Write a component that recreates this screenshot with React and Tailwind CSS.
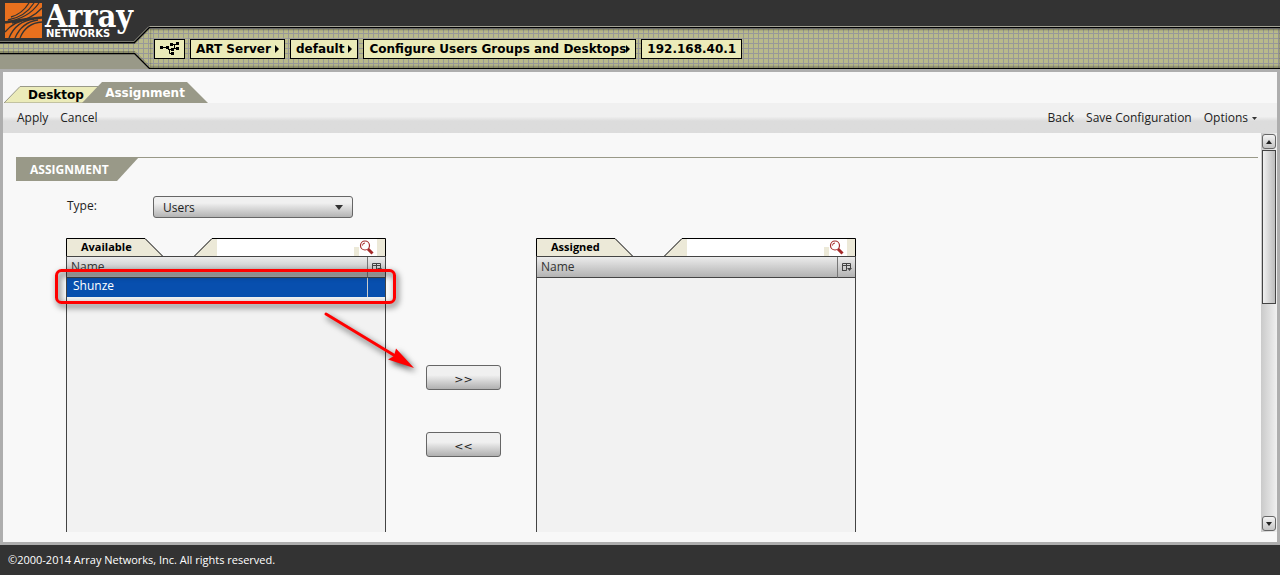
import React, { useState } from 'react';

const crumbs = ['ART Server', 'default', 'Configure Users Groups and Desktops', '192.168.40.1'];

const Logo = () => (
    <svg width="150" height="69" className="block shrink-0" role="img" aria-label="Array Networks">
        <defs>
            <pattern id="mesh" width="5" height="5" patternUnits="userSpaceOnUse">
                <rect width="5" height="5" fill="#b9ba8b" />
                <path d="M3.5 0V5M0 3.5H5" stroke="#989898" />
            </pattern>
        </defs>
        <rect width="150" height="69" fill="#333333" />
        <path d="M0 53H135L150 68V69H0Z" fill="#999988" />
        <path d="M0 42H134L150 26V69L134 53H0Z" fill="url(#mesh)" />
        <path d="M0 43.5H135L150 28.5M0 51.5H135L150 66.5" fill="none" stroke="#000" strokeOpacity=".25" />
        <path d="M0 41.5H134L149 26.5H150" fill="none" stroke="#a3a396" />
        <path d="M0 42.5H134.5L149.5 27.5H150M0 53.5H134.5L149.5 68.5H150" fill="none" stroke="#000" strokeWidth="1.3" />
        <rect x="5" y="3" width="37" height="35" fill="#e8701e" />
        <g fill="none" stroke="#333333" strokeWidth="1.3">
            <path d="M11 17Q22 14 29 3" />
            <path d="M8 20Q25 17 34 3" />
            <path d="M5 22Q28 19 39 3" />
            <path d="M12 23Q31 20 42 8" />
            <path d="M42 22Q26 23 20 38" />
            <path d="M38 20Q22 22 15 38" />
            <path d="M34 19Q16 21 9 38" />
            <path d="M30 19Q14 21 5 32" />
            <path d="M5 22.5Q24 19 42 17.5" strokeWidth="2.4" />
        </g>
        <text x="45" y="27" fill="#fff" fontSize="32" fontWeight="700" fontFamily="'DejaVu Serif Condensed', 'DejaVu Serif', serif">Array</text>
        <text x="46" y="37" fill="#fff" fontSize="10" fontWeight="700" fontFamily="'DejaVu Sans', sans-serif">NETWORKS</text>
    </svg>
);

const Crumb = ({ children, arrow }) => (
    <a
        href="#"
        className={`flex h-5 items-center border border-black bg-[#ebebb9] px-[5px] font-['DejaVu_Sans'] text-[12px] font-bold text-black ${children.length > 20 ? 'gap-0' : 'gap-1'}`}
    >
        {children}
        {arrow && (
            <svg width="4" height="8" className="shrink-0" aria-hidden="true"><path d="M0 0L4 4L0 8Z" /></svg>
        )}
    </a>
);

const Header = () => (
    <header className="flex bg-[#333333]">
        <Logo />
        <div className="flex flex-1 flex-col pt-[26px]">
            <div className="border-t border-[#a3a396]" />
            <nav
                aria-label="Breadcrumb"
                className="flex flex-1 items-center gap-[5px] border-y border-black bg-[#b9ba8b] bg-[linear-gradient(90deg,transparent_3px,#989898_3px,#989898_4px,transparent_4px),linear-gradient(#989898_1px,transparent_1px)] bg-[length:5px_5px] pt-px pl-1 shadow-[inset_0_2px_2px_#0005,inset_0_-2px_2px_#0004]"
            >
                <a href="#" aria-label="Home" className="flex h-5 items-center border border-black bg-[#ebebb9] px-[5px]">
                    <svg width="19" height="14" aria-hidden="true">
                        <path d="M3 5.5H8M8.5 5V8M8 7.5H12M10 3.5H12V2.5H17M14.5 2V7M14 6.5H17M9.5 8V11.5H12" fill="none" stroke="#000" />
                        <path d="M0 4h3v3h-3zM6 4h3v3h-3zM10 1h3v3h-3zM16 0h3v3h-3zM11 6h3v3h-3zM16 5h3v3h-3zM11 10h3v3h-3z" />
                    </svg>
                </a>
                {crumbs.map((text, i) => (
                    <Crumb key={text} arrow={i < crumbs.length - 1}>{text}</Crumb>
                ))}
            </nav>
        </div>
    </header>
);

const Tabs = () => (
    <div className="flex h-[31px] items-end" role="tablist">
        <button type="button" role="tab" aria-selected="false" className="relative h-[17px] w-[98px] pl-2 font-['DejaVu_Sans'] text-[12px] leading-4 font-bold text-black">
            <svg width="98" height="17" className="absolute top-0 left-0" aria-hidden="true">
                <path d="M1 17L17 .5H98V17Z" fill="#ebebb9" stroke="#999988" />
            </svg>
            <span className="relative">Desktop</span>
        </button>
        <button type="button" role="tab" aria-selected="true" className="relative -ml-[19px] h-[21px] w-[126px] pt-px font-['DejaVu_Sans'] text-[12px] leading-5 font-bold text-white">
            <svg width="126" height="21" className="absolute top-0 left-0" aria-hidden="true">
                <path d="M0 21L20 0H105L126 21Z" fill="#999988" />
            </svg>
            <span className="relative">Assignment</span>
        </button>
    </div>
);

const Toolbar = () => (
    <div className="flex h-[30px] items-center justify-between bg-linear-to-b from-[#f0f0f0] from-45% to-[#dcdcdc] to-60% pr-5 pl-[14px]">
        <div className="flex gap-3">
            <button type="button">Apply</button>
            <button type="button">Cancel</button>
        </div>
        <div className="flex gap-3">
            <button type="button">Back</button>
            <button type="button">Save Configuration</button>
            <button type="button" className="flex items-center gap-1">
                Options
                <svg width="5" height="3" aria-hidden="true"><path d="M0 0H5L2.5 3Z" fill="#333" /></svg>
            </button>
        </div>
    </div>
);

const ScrollButton = ({ label, d }) => (
    <button type="button" aria-label={label} className="flex h-[15px] w-[14px] items-center justify-center rounded-[3px] border border-[#666] bg-linear-to-b from-[#f4f4f4] to-[#c4c4c4]">
        <svg width="6" height="4" aria-hidden="true"><path d={d} fill="#222" /></svg>
    </button>
);

const ScrollBar = () => (
    <div className="flex w-4 shrink-0 flex-col items-center bg-linear-to-r from-[#cacaca] to-[#f0f0f0] py-px">
        <ScrollButton label="Scroll up" d="M0 4L3 0L6 4Z" />
        <div className="mt-px flex w-[14px] flex-1 flex-col">
            <div className="h-[42%] border border-[#444] bg-linear-to-r from-[#f0f0f0] to-[#bdbdbd]" />
        </div>
        <ScrollButton label="Scroll down" d="M0 0H6L3 4Z" />
    </div>
);

const ListPanel = ({ title, rows, selected, onSelect, children }) => (
    <section className="relative flex w-80 flex-col">
        <div className="relative flex h-[18px] items-stretch">
            <svg width="320" height="18" className="absolute top-0 left-0" aria-hidden="true">
                <path d="M.5 18V.5H79L96.5 18" fill="#ece9d8" stroke="#000" />
                <path d="M128.5 18L146 .5H319.5V18" fill="#ece9d8" stroke="#000" />
            </svg>
            <h3 className="relative w-[151px] pl-[15px] text-[11px] leading-[18px] font-bold text-black">{title}</h3>
            <input
                type="text"
                aria-label={`Search ${title}`}
                className="relative mt-px w-[137px] bg-white px-1 outline-none"
            />
            <button type="button" aria-label="Search" className="relative mt-px w-[23px] bg-white">
                <svg width="23" height="17" aria-hidden="true">
                    <path d="M0 8H5V17H0Z" fill="#ece9d8" />
                    <circle cx="11" cy="6.5" r="4.5" fill="#fff" stroke="#a52a2a" strokeWidth="1.2" />
                    <path d="M8.5 6.5Q8.5 4 11 4" fill="none" stroke="#a52a2a" />
                    <path d="M14 10L18.5 14.5" stroke="#a52a2a" strokeWidth="3" />
                </svg>
            </button>
        </div>
        <div className="flex flex-1 flex-col border-x border-t border-[#444] bg-[#f2f2f2]">
            <table className="w-full table-fixed border-separate border-spacing-0">
                <thead>
                    <tr className="bg-linear-to-b from-[#ececec] to-[#b0b0b0]">
                        <th scope="col" className="h-[21px] border-b border-[#444] p-0 pl-1 text-left leading-5 font-normal text-[#333]">Name</th>
                        <th scope="col" className="h-[21px] w-[18px] border-b border-l border-b-[#444] border-l-[#777] p-0">
                            <button type="button" aria-label="Choose columns" className="flex w-full justify-center">
                                <svg width="10" height="9" aria-hidden="true">
                                    <path d="M.5 7.5V.5H8.5V5M0 2.5H9M4.5 0V7.5H0" fill="none" stroke="#444" />
                                    <path d="M5 5H10L7.5 8Z" fill="#444" />
                                </svg>
                            </button>
                        </th>
                    </tr>
                </thead>
                <tbody>
                    {rows.map((name) => (
                        <tr
                            key={name}
                            onClick={() => onSelect(name)}
                            className={selected === name ? 'bg-[#084fae] text-white' : ''}
                        >
                            <td className="h-[19px] p-0 pb-[3px] pl-[6px] leading-4">{name}</td>
                            <td className="border-l border-[#ccc] p-0" />
                        </tr>
                    ))}
                </tbody>
            </table>
        </div>
        {children}
    </section>
);

// Highlight frame and arrow drawn over the Available list
const Callout = () => (
    <svg width="380" height="130" className="pointer-events-none absolute top-6 -left-4 z-10 drop-shadow-[2px_3px_3px_rgba(0,0,0,0.7)]" aria-hidden="true">
        <rect x="6.5" y="8.5" width="338" height="32" rx="5" fill="none" stroke="#f00" strokeWidth="3" />
        <path d="M276 52L347 95" stroke="#f00" strokeWidth="3" strokeLinecap="round" />
        <path d="M364 106L338 97.5L344 94L346 86.5Z" fill="#f00" />
    </svg>
);

const MoveButton = ({ label, children, onClick }) => (
    <button
        type="button"
        aria-label={label}
        onClick={onClick}
        className="h-[25px] w-[75px] rounded-[3px] border border-[#666] bg-linear-to-b from-[#f0f0f0] from-40% to-[#b0b0b0] pt-1 font-['DejaVu_Sans'] text-[11px] leading-5"
    >
        {children}
    </button>
);

const App = () => {
    const [available, setAvailable] = useState(['Shunze']);
    const [assigned, setAssigned] = useState([]);
    const [selected, setSelected] = useState('Shunze');

    const assign = () => {
        if (!available.includes(selected)) return;
        setAvailable(available.filter((n) => n !== selected));
        setAssigned([...assigned, selected]);
    };

    const unassign = () => {
        if (!assigned.includes(selected)) return;
        setAssigned(assigned.filter((n) => n !== selected));
        setAvailable([...available, selected]);
    };

    return (
        <div className="flex min-h-screen flex-col bg-[#333333] font-['Open_Sans','Noto_Sans',sans-serif] text-[12px] leading-4 text-[#222]">
            <Header />
            <main className="flex flex-1 flex-col border-[3px] border-[#aeaeae] bg-[#f8f8f8] pb-[10px]">
                <Tabs />
                <Toolbar />
                <div className="flex flex-1">
                    <div className="flex flex-1 flex-col pt-6 pr-[3px] pl-[13px]">
                        <div className="flex h-6 border-t border-[#999988]">
                            <h2 className="relative -mt-px h-6 w-[123px] pt-px pl-[14px] text-[12px] leading-6 font-bold text-white">
                                <svg width="123" height="24" className="absolute top-0 left-0" aria-hidden="true">
                                    <path d="M0 0H123L101 24H0Z" fill="#999988" />
                                </svg>
                                <span className="relative">ASSIGNMENT</span>
                            </h2>
                        </div>
                        <div className="flex flex-1 flex-col pt-[15px] pl-[50px]">
                            <div className="flex">
                                <label htmlFor="type" className="w-[87px] pt-[2px] pl-px">Type:</label>
                                <div className="relative">
                                    <select id="type" className="h-[22px] w-[200px] appearance-none rounded-[3px] border border-[#666] bg-linear-to-b from-[#f0f0f0] from-30% to-[#b4b4b4] pt-px pl-[9px]">
                                        <option>Users</option>
                                        <option>Groups</option>
                                    </select>
                                    <svg width="8" height="5" className="pointer-events-none absolute top-[9px] right-[10px]" aria-hidden="true">
                                        <path d="M0 0H8L4 5Z" fill="#333" />
                                    </svg>
                                </div>
                            </div>
                            <div className="flex flex-1 pt-5">
                                <ListPanel title="Available" rows={available} selected={selected} onSelect={setSelected}>
                                    <Callout />
                                </ListPanel>
                                <div className="flex w-[150px] flex-col items-center gap-[42px] pt-[127px] pl-[5px]">
                                    <MoveButton label="Assign" onClick={assign}>&gt;&gt;</MoveButton>
                                    <MoveButton label="Unassign" onClick={unassign}>&lt;&lt;</MoveButton>
                                </div>
                                <ListPanel title="Assigned" rows={assigned} selected={selected} onSelect={setSelected} />
                            </div>
                        </div>
                    </div>
                    <ScrollBar />
                </div>
            </main>
            <footer className="flex h-[30px] items-center px-2 text-[11px] text-white">
                ©2000-2014 Array Networks, Inc. All rights reserved.
            </footer>
        </div>
    );
};

export default App;
